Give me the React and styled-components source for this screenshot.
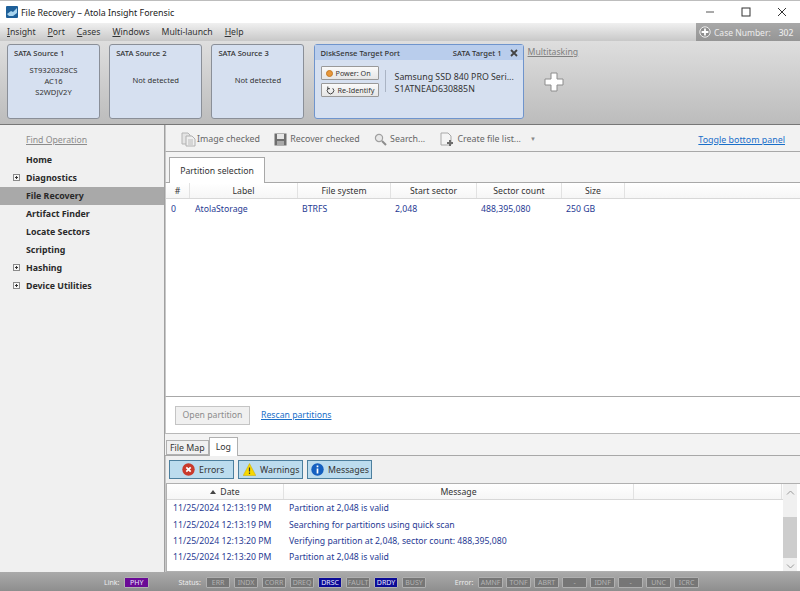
import React from 'react';
import styled, { createGlobalStyle } from 'styled-components';

const GlobalStyle = createGlobalStyle`
    html, body { margin: 0; padding: 0; }
    body { font-family: "Noto Sans", "Open Sans", "Liberation Sans", sans-serif; font-size: 8.7px; color: #222; }
    * { box-sizing: border-box; }
`;

const Window = styled.div`
    width: 800px;
    height: 591px;
    display: flex;
    flex-direction: column;
    overflow: hidden;
    background: #fff;
`;

const TitleBar = styled.div`
    height: 23px;
    flex: none;
    display: flex;
    align-items: center;
    padding-left: 6px;
    background: #fff;
    border-top: 1px solid #bdbdbd;
`;

const TitleText = styled.span`
    margin-left: 3px;
    font-size: 8.9px;
    color: #1a1a1a;
`;

const WindowButtons = styled.div`
    margin-left: auto;
    display: flex;
    align-items: center;
    gap: 26px;
    padding-right: 13px;
    color: #333;
`;

const MenuBar = styled.div`
    height: 18px;
    flex: none;
    display: flex;
    align-items: center;
    padding-left: 7px;
    background: linear-gradient(#f0f0f0, #c8c8c8);
`;

const MenuItem = styled.span`
    display: inline-block;
    margin-right: 12px;
    color: #333;
    font-size: 8.7px;
    &::first-letter { text-decoration: ${p => (p.$plain ? 'none' : 'underline')}; }
`;

const CaseBox = styled.div`
    margin-left: auto;
    width: 104px;
    height: 18px;
    display: flex;
    align-items: center;
    gap: 3px;
    padding-left: 3px;
    background: linear-gradient(#a8a8a8, #959595);
    color: #ececec;
    font-size: 8.5px;
    white-space: nowrap;
`;

const CaseValue = styled.span`
    margin-left: 5px;
    font-weight: 500;
`;

const PortBar = styled.div`
    height: 84px;
    flex: none;
    display: flex;
    align-items: flex-start;
    padding: 3px 0 0 7px;
    background: linear-gradient(#dedede, #bcbcbc);
    border-bottom: 1px solid #777;
`;

const PortCard = styled.div`
    width: 93px;
    height: 75px;
    margin-right: 9.2px;
    padding: 2px 6px;
    background: #d6e0f0;
    border: 1px solid #8a8f98;
    border-radius: 3px;
    display: flex;
    flex-direction: column;
`;

const PortName = styled.div`
    font-size: 7.6px;
    font-weight: 500;
    color: #333;
    line-height: 13px;
`;

const PortBody = styled.div`
    text-align: center;
    font-size: 7.6px;
    line-height: 10.8px;
    color: #333;
    padding-top: ${p => p.$top}px;
`;

const TargetCard = styled.div`
    width: 210px;
    height: 75px;
    background: #d6e0f0;
    border: 1px solid #6f94cc;
    border-radius: 3px;
    display: flex;
    flex-direction: column;
`;

const TargetHead = styled.div`
    height: 15px;
    display: flex;
    align-items: center;
    padding: 0 5px 0 6px;
    background: #b9cdec;
    font-size: 7.6px;
    font-weight: 500;
    color: #333;
`;

const TargetSlot = styled.span`
    margin-left: auto;
    margin-right: 8px;
`;

const TargetBody = styled.div`
    display: flex;
    padding: 6px 0 0 6px;
`;

const TargetButtons = styled.div`
    display: flex;
    flex-direction: column;
    gap: 3px;
    width: 58px;
`;

const SmallButton = styled.div`
    height: 14px;
    display: flex;
    align-items: center;
    gap: 3px;
    padding-left: 4px;
    background: linear-gradient(#fafafa, #e6e6e6);
    border: 1px solid #999;
    border-radius: 1px;
    font-size: 7.2px;
    color: #333;
    white-space: nowrap;
`;

const Dot = styled.span`
    width: 7px;
    height: 7px;
    border-radius: 50%;
    background: #e8973a;
    border: 1px solid #c47a22;
`;

const TargetInfo = styled.div`
    margin-left: 6px;
    margin-top: 4px;
    height: 22px;
    padding: 1px 0 0 9px;
    border-left: 1px solid #aab4c4;
    font-size: 8.8px;
    line-height: 12px;
    color: #333;
    white-space: nowrap;
`;

const MultiColumn = styled.div`
    margin-left: 4px;
    display: flex;
    flex-direction: column;
`;

const MultiLink = styled.span`
    color: #808080;
    font-size: 8.7px;
    line-height: 13px;
    padding-top: 2px;
    text-decoration: underline;
`;

const PlusWrap = styled.div`
    padding: 13px 0 0 16px;
`;

const Main = styled.div`
    flex: 1;
    display: flex;
    min-height: 0;
`;

const Sidebar = styled.div`
    width: 165px;
    flex: none;
    background: #f0f0f0;
    border-right: 1px solid #a0a0a0;
    padding-top: 1px;
`;

const FindLink = styled.div`
    height: 25px;
    padding: 8px 0 0 26px;
    color: #8c8c8c;
    font-size: 8.7px;
    text-decoration: underline;
`;

const NavItem = styled.div`
    height: 18px;
    display: flex;
    align-items: center;
    padding-left: 26px;
    position: relative;
    font-size: 8.8px;
    font-weight: 700;
    color: #2a2a2a;
    background: ${p => (p.$active ? '#a9a9a9' : 'transparent')};
`;

const Expander = styled.span`
    position: absolute;
    left: 13px;
    top: 5px;
    width: 7px;
    height: 7px;
    border: 1px solid #8a8a8a;
    background: #f6f6f6;
    &::before { content: ''; position: absolute; left: 1px; top: 2px; width: 3px; height: 1px; background: #333; }
    &::after { content: ''; position: absolute; left: 2px; top: 1px; width: 1px; height: 3px; background: #333; }
`;

const Content = styled.div`
    flex: 1;
    min-width: 0;
    display: flex;
    flex-direction: column;
    background: #f3f3f3;
`;

const Toolbar = styled.div`
    height: 27px;
    flex: none;
    display: flex;
    align-items: center;
    padding: 2px 0 0 15px;
    background: #f2f2f2;
    border-bottom: 1px solid #a8a8a8;
    border-left: 1px solid #c8c8c8;
    color: #666;
    font-size: 8.85px;
`;

const ToolButton = styled.span`
    display: flex;
    align-items: center;
    gap: 1px;
    margin-right: 14px;
    white-space: nowrap;
`;

const Caret = styled.span`
    margin-left: -5px;
    color: #888;
    font-size: 6px;
`;

const ToggleLink = styled.span`
    margin-left: auto;
    margin-right: 15px;
    color: #1a6fc9;
    font-size: 8.9px;
    text-decoration: underline;
`;

const TabStrip = styled.div`
    height: 31px;
    flex: none;
    display: flex;
    align-items: flex-end;
    padding-left: 3px;
    background: #f3f3f3;
    border-bottom: 1px solid #a8a8a8;
    border-left: 1px solid #c8c8c8;
`;

const BigTab = styled.div`
    width: 96px;
    height: 26px;
    margin-bottom: -1px;
    display: flex;
    align-items: center;
    justify-content: center;
    background: #fff;
    border: 1px solid #a8a8a8;
    border-bottom: none;
    font-size: 8.7px;
    color: #333;
`;

const PartitionPane = styled.div`
    height: 214px;
    flex: none;
    background: #fff;
    border-left: 1px solid #c8c8c8;
    border-bottom: 1px solid #a8a8a8;
`;

const HeaderRow = styled.div`
    display: flex;
    height: 16px;
    background: linear-gradient(#fff, #f6f6f6);
    border-bottom: 1px solid #d8d8d8;
`;

const HeaderCell = styled.div`
    width: ${p => p.$w}px;
    flex: none;
    display: flex;
    align-items: center;
    justify-content: center;
    gap: 4px;
    border-right: 1px solid #e2e2e2;
    font-size: 8.7px;
    color: #333;
`;

const DataRow = styled.div`
    display: flex;
    height: ${p => p.$h || 19}px;
    align-items: center;
`;

const DataCell = styled.div`
    width: ${p => p.$w}px;
    flex: none;
    padding-left: ${p => p.$pad || 4}px;
    font-size: 8.7px;
    color: #1f3a93;
    white-space: nowrap;
`;

const ActionRow = styled.div`
    height: 37px;
    flex: none;
    display: flex;
    align-items: center;
    padding-left: 9px;
    gap: 11px;
    background: #fff;
    border-left: 1px solid #c8c8c8;
    border-bottom: 1px solid #b8b8b8;
`;

const DisabledButton = styled.div`
    width: 75px;
    height: 19px;
    display: flex;
    align-items: center;
    justify-content: center;
    background: #f0f0f0;
    border: 1px solid #c4c4c4;
    color: #8c8c8c;
    font-size: 8.7px;
`;

const RescanLink = styled.span`
    color: #1a6fc9;
    font-size: 8.7px;
    text-decoration: underline;
`;

const BottomTabs = styled.div`
    height: 22px;
    flex: none;
    display: flex;
    align-items: flex-end;
    padding-left: 1px;
    background: #f3f3f3;
    border-bottom: 1px solid #a8a8a8;
`;

const SmallTab = styled.div`
    height: ${p => (p.$on ? 19 : 15)}px;
    margin-bottom: ${p => (p.$on ? -1 : 0)}px;
    padding: 0 ${p => (p.$on ? 6 : 3)}px;
    display: flex;
    align-items: center;
    background: ${p => (p.$on ? '#fff' : '#f0f0f0')};
    border: 1px solid #b0b0b0;
    border-bottom: ${p => (p.$on ? 'none' : '1px solid #b0b0b0')};
    font-size: 8.8px;
    color: #333;
`;

const LogPane = styled.div`
    flex: 1;
    min-height: 0;
    display: flex;
    flex-direction: column;
    background: #f0f0f0;
    border-left: 1px solid #c8c8c8;
`;

const FilterBar = styled.div`
    height: 27px;
    flex: none;
    display: flex;
    align-items: center;
    gap: 4px;
    padding-left: 3px;
`;

const FilterButton = styled.div`
    width: 65px;
    height: 19px;
    display: flex;
    align-items: center;
    gap: 4px;
    padding-left: ${p => p.$pad}px;
    background: #bcdcee;
    border: 1px solid #4c7f9e;
    font-size: 8.8px;
    color: #333;
`;

const LogList = styled.div`
    flex: 1;
    min-height: 0;
    display: flex;
    background: #fff;
    border: 1px solid #b0b0b0;
    border-right: none;
`;

const LogTable = styled.div`
    flex: 1;
    min-width: 0;
`;

const Scrollbar = styled.div`
    width: 14px;
    flex: none;
    display: flex;
    flex-direction: column;
    background: #f0f0f0;
    margin-right: 3px;
`;

const ScrollArrow = styled.div`
    height: 16px;
    flex: none;
    display: flex;
    align-items: center;
    justify-content: center;
`;

const ScrollTrack = styled.div`
    flex: 1;
    padding-top: 17px;
`;

const ScrollThumb = styled.div`
    height: 41px;
    background: #cdcdcd;
`;

const StatusBar = styled.div`
    height: 19px;
    flex: none;
    display: flex;
    align-items: center;
    padding: 2px 0 0 104px;
    background: linear-gradient(#aaa, #8e8e8e);
    color: #ececec;
    font-size: 7px;
`;

const StatusLabel = styled.span`
    margin-right: 5px;
    margin-left: ${p => p.$gap || 0}px;
`;

const Led = styled.span`
    width: 24.5px;
    height: 11px;
    margin-right: 3.5px;
    display: flex;
    align-items: center;
    justify-content: center;
    background: ${p => p.$bg || '#767676'};
    color: ${p => (p.$bg ? '#e8e8ff' : '#b4b4b4')};
    border: 1px solid #b0b0b0;
    border-radius: 1px;
    font-size: 7px;
`;

const Logo = () => (
    <svg width="12" height="12" viewBox="0 0 12 12">
        <rect width="12" height="12" rx="1" fill="#1d5f99" />
        <path d="M1 8 L5 5 L7 6 L11 2 L11 7 L7 10 L3 10 Z" fill="#a8d4ee" />
    </svg>
);

const PlusCircle = () => (
    <svg width="12" height="12" viewBox="0 0 12 12">
        <circle cx="6" cy="6" r="5.2" fill="#8f8f8f" stroke="#eee" />
        <path d="M6 2.6v6.8M2.6 6h6.8" stroke="#fff" strokeWidth="1.8" />
    </svg>
);

const BigPlus = () => (
    <svg width="20" height="20" viewBox="0 0 20 20">
        <path d="M7 1h6v6h6v6h-6v6H7v-6H1V7h6z" fill="#fff" stroke="#8c8c8c" />
    </svg>
);

const ReloadIcon = () => (
    <svg width="9" height="9" viewBox="0 0 10 10">
        <path d="M2.5 2.5a3.6 3.6 0 1 0 5 0" fill="none" stroke="#333" strokeWidth="1" />
        <path d="M2 0.6v2.4h2.4" fill="none" stroke="#333" strokeWidth="1" />
    </svg>
);

const CopyIcon = () => (
    <svg width="15" height="15" viewBox="0 0 15 15">
        <path d="M1 1h6l2 2v9H1z" fill="#e4e4e4" stroke="#b4b4b4" />
        <path d="M5 4h6l3 3v7H5z" fill="#efefef" stroke="#b0b0b0" />
        <path d="M7 8h5M7 10h5M7 12h5" stroke="#bbb" />
    </svg>
);

const SaveIcon = () => (
    <svg width="13" height="13" viewBox="0 0 13 13">
        <rect x="0.5" y="0.5" width="12" height="12" fill="#6e6e6e" />
        <rect x="3" y="1" width="7" height="5" fill="#e6e6e6" />
        <rect x="3" y="8" width="7" height="4" fill="#a9a9a9" />
    </svg>
);

const SearchIcon = () => (
    <svg width="13" height="13" viewBox="0 0 13 13">
        <circle cx="5" cy="5" r="3.6" fill="#e8e8e8" stroke="#a0a0a0" strokeWidth="1.2" />
        <path d="M8 8l4 4" stroke="#8c8c8c" strokeWidth="2" />
    </svg>
);

const FilePlusIcon = () => (
    <svg width="15" height="15" viewBox="0 0 15 15">
        <path d="M2 1h7l3 3v9H2z" fill="#f4f4f4" stroke="#a8a8a8" />
        <path d="M11 8v6M8 11h6" stroke="#6e6e6e" strokeWidth="2" />
    </svg>
);

const ErrorIcon = () => (
    <svg width="13" height="13" viewBox="0 0 13 13">
        <circle cx="6.5" cy="6.5" r="6.2" fill="#c93a2b" />
        <path d="M4.3 4.3l4.4 4.4M8.7 4.3l-4.4 4.4" stroke="#fff" strokeWidth="1.7" />
    </svg>
);

const WarningIcon = () => (
    <svg width="13" height="13" viewBox="0 0 13 13">
        <path d="M6.5 0.5L12.8 12.5H0.2z" fill="#f7d800" stroke="#c9a800" strokeWidth="0.5" />
        <path d="M6.5 4.5v4M6.5 9.5v1.5" stroke="#333" strokeWidth="1.2" />
    </svg>
);

const InfoIcon = () => (
    <svg width="13" height="13" viewBox="0 0 13 13">
        <circle cx="6.5" cy="6.5" r="6.2" fill="#1560c0" />
        <path d="M6.5 5.5v5M6.5 2.6v1.6" stroke="#fff" strokeWidth="1.7" />
    </svg>
);

const Chevron = ({ up }) => (
    <svg width="9" height="5" viewBox="0 0 9 5">
        <path d={up ? 'M1 4.5L4.5 1 8 4.5' : 'M1 .5L4.5 4 8 .5'} fill="none" stroke="#9a9a9a" />
    </svg>
);

const navItems = [
    { name: 'Home' },
    { name: 'Diagnostics', tree: true },
    { name: 'File Recovery', active: true },
    { name: 'Artifact Finder' },
    { name: 'Locate Sectors' },
    { name: 'Scripting' },
    { name: 'Hashing', tree: true },
    { name: 'Device Utilities', tree: true },
];

const logRows = [
    ['11/25/2024 12:13:19 PM', 'Partition at 2,048 is valid'],
    ['11/25/2024 12:13:19 PM', 'Searching for partitions using quick scan'],
    ['11/25/2024 12:13:20 PM', 'Verifying partition at 2,048, sector count: 488,395,080'],
    ['11/25/2024 12:13:20 PM', 'Partition at 2,048 is valid'],
];

const statusLeds = ['ERR', 'INDX', 'CORR', 'DREQ', 'DRSC', 'FAULT', 'DRDY', 'BUSY'];
const errorLeds = ['AMNF', 'TONF', 'ABRT', '-', 'IDNF', '-', 'UNC', 'ICRC'];
const lit = { DRSC: '#0a0a96', DRDY: '#0a0a96' };

export default function App() {
    return (
        <Window>
            <GlobalStyle />
            <TitleBar>
                <Logo />
                <TitleText>File Recovery – Atola Insight Forensic</TitleText>
                <WindowButtons>
                    <svg width="10" height="10" viewBox="0 0 10 10"><path d="M1 5h8" stroke="#555" /></svg>
                    <svg width="10" height="10" viewBox="0 0 10 10"><rect x="1" y="1" width="8" height="8" fill="none" stroke="#333" /></svg>
                    <svg width="10" height="10" viewBox="0 0 10 10"><path d="M1 1l8 8M9 1l-8 8" stroke="#333" /></svg>
                </WindowButtons>
            </TitleBar>
            <MenuBar>
                {['Insight', 'Port', 'Cases', 'Windows', 'Multi-launch', 'Help'].map(m => (
                    <MenuItem key={m} $plain={m === 'Multi-launch'}>{m}</MenuItem>
                ))}
                <CaseBox>
                    <PlusCircle />
                    Case Number:
                    <CaseValue>302</CaseValue>
                </CaseBox>
            </MenuBar>
            <PortBar>
                <PortCard>
                    <PortName>SATA Source 1</PortName>
                    <PortBody $top={5}>ST9320328CS<br />AC16<br />S2WDJV2Y</PortBody>
                </PortCard>
                <PortCard>
                    <PortName>SATA Source 2</PortName>
                    <PortBody $top={15}>Not detected</PortBody>
                </PortCard>
                <PortCard>
                    <PortName>SATA Source 3</PortName>
                    <PortBody $top={15}>Not detected</PortBody>
                </PortCard>
                <TargetCard>
                    <TargetHead>
                        DiskSense Target Port
                        <TargetSlot>SATA Target 1</TargetSlot>
                        <svg width="8" height="8" viewBox="0 0 8 8"><path d="M1 1l6 6M7 1L1 7" stroke="#444" strokeWidth="1.8" /></svg>
                    </TargetHead>
                    <TargetBody>
                        <TargetButtons>
                            <SmallButton><Dot />Power: On</SmallButton>
                            <SmallButton><ReloadIcon />Re-Identify</SmallButton>
                        </TargetButtons>
                        <TargetInfo>Samsung SSD 840 PRO Seri...<br />S1ATNEAD630885N</TargetInfo>
                    </TargetBody>
                </TargetCard>
                <MultiColumn>
                    <MultiLink>Multitasking</MultiLink>
                    <PlusWrap><BigPlus /></PlusWrap>
                </MultiColumn>
            </PortBar>
            <Main>
                <Sidebar>
                    <FindLink>Find Operation</FindLink>
                    {navItems.map(n => (
                        <NavItem key={n.name} $active={n.active}>
                            {n.tree && <Expander />}
                            {n.name}
                        </NavItem>
                    ))}
                </Sidebar>
                <Content>
                    <Toolbar>
                        <ToolButton><CopyIcon />Image checked</ToolButton>
                        <ToolButton><SaveIcon />&nbsp;Recover checked</ToolButton>
                        <ToolButton><SearchIcon />&nbsp;Search...</ToolButton>
                        <ToolButton><FilePlusIcon />&nbsp;Create file list...</ToolButton>
                        <Caret>▼</Caret>
                        <ToggleLink>Toggle bottom panel</ToggleLink>
                    </Toolbar>
                    <TabStrip>
                        <BigTab>Partition selection</BigTab>
                    </TabStrip>
                    <PartitionPane>
                        <HeaderRow>
                            <HeaderCell $w={24}>#</HeaderCell>
                            <HeaderCell $w={108}>Label</HeaderCell>
                            <HeaderCell $w={93}>File system</HeaderCell>
                            <HeaderCell $w={86}>Start sector</HeaderCell>
                            <HeaderCell $w={85}>Sector count</HeaderCell>
                            <HeaderCell $w={63}>Size</HeaderCell>
                        </HeaderRow>
                        <DataRow>
                            <DataCell $w={24} $pad={5}>0</DataCell>
                            <DataCell $w={108} $pad={5}>AtolaStorage</DataCell>
                            <DataCell $w={93}>BTRFS</DataCell>
                            <DataCell $w={86}>2,048</DataCell>
                            <DataCell $w={85}>488,395,080</DataCell>
                            <DataCell $w={63}>250 GB</DataCell>
                        </DataRow>
                    </PartitionPane>
                    <ActionRow>
                        <DisabledButton>Open partition</DisabledButton>
                        <RescanLink>Rescan partitions</RescanLink>
                    </ActionRow>
                    <BottomTabs>
                        <SmallTab>File Map</SmallTab>
                        <SmallTab $on>Log</SmallTab>
                    </BottomTabs>
                    <LogPane>
                        <FilterBar>
                            <FilterButton $pad={12}><ErrorIcon />Errors</FilterButton>
                            <FilterButton $pad={4}><WarningIcon />Warnings</FilterButton>
                            <FilterButton $pad={3}><InfoIcon />Messages</FilterButton>
                        </FilterBar>
                        <LogList>
                            <LogTable>
                                <HeaderRow>
                                    <HeaderCell $w={117}><svg width="6" height="4" viewBox="0 0 6 4"><path d="M0 4L3 0l3 4z" fill="#444" /></svg>Date</HeaderCell>
                                    <HeaderCell $w={350}>Message</HeaderCell>
                                    <HeaderCell $w={148} />
                                </HeaderRow>
                                {logRows.map((r, i) => (
                                    <DataRow key={i} $h={16.4}>
                                        <DataCell $w={117} $pad={6}>{r[0]}</DataCell>
                                        <DataCell $w={400} $pad={5}>{r[1]}</DataCell>
                                    </DataRow>
                                ))}
                            </LogTable>
                            <Scrollbar>
                                <ScrollArrow><Chevron up /></ScrollArrow>
                                <ScrollTrack><ScrollThumb /></ScrollTrack>
                                <ScrollArrow><Chevron /></ScrollArrow>
                            </Scrollbar>
                        </LogList>
                    </LogPane>
                </Content>
            </Main>
            <StatusBar>
                <StatusLabel>Link:</StatusLabel>
                <Led $bg="#6a0a96">PHY</Led>
                <StatusLabel $gap={26}>Status:</StatusLabel>
                {statusLeds.map(s => <Led key={s} $bg={lit[s]}>{s}</Led>)}
                <StatusLabel $gap={25}>Error:</StatusLabel>
                {errorLeds.map((s, i) => <Led key={i}>{s}</Led>)}
            </StatusBar>
        </Window>
    );
}
